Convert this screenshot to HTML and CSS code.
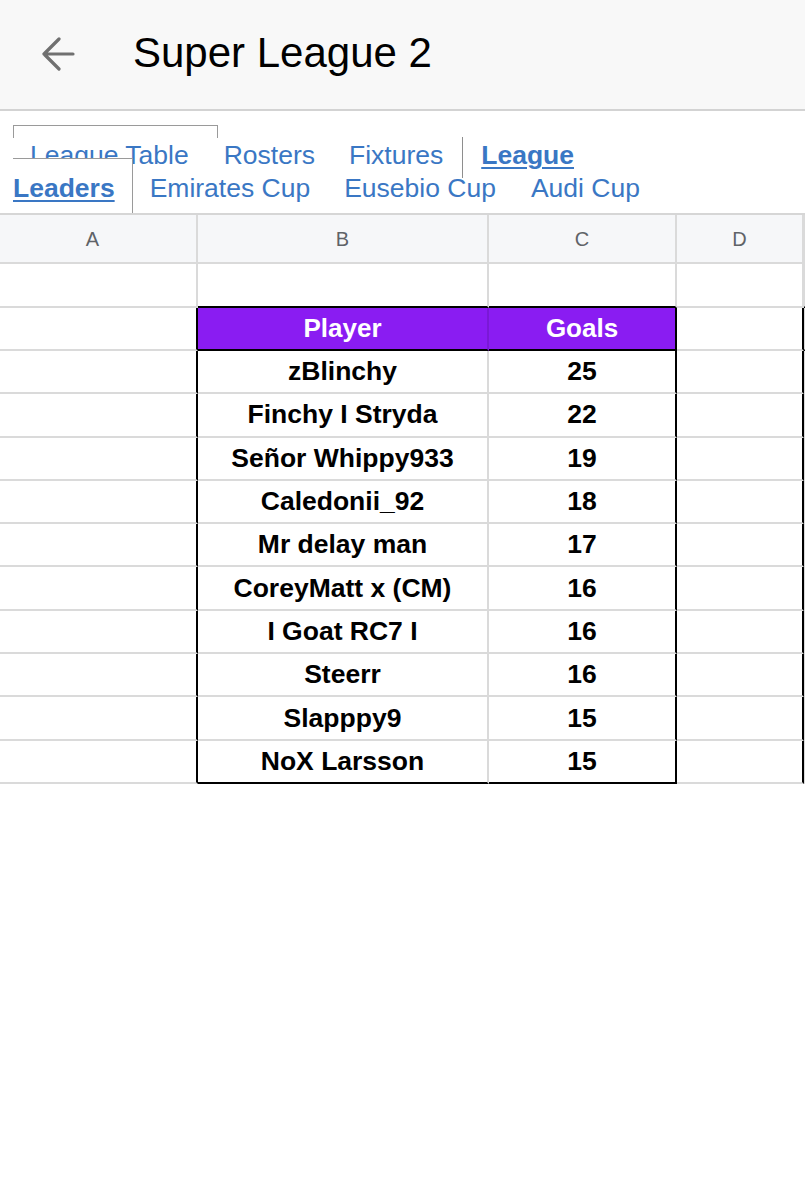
FILE: index.html
```html
<!DOCTYPE html>
<html lang="en">
<head>
    <meta charset="UTF-8">
    <meta name="viewport" content="width=device-width, initial-scale=1.0">
    <title>Super League 2</title>
    <link rel="stylesheet" href="styles.css">
</head>
<body>
    <header class="appbar">
        <a class="back" href="#">
            <svg width="34" height="34" viewBox="0 0 34 34">
                <path d="M32 17H3 M18 2L3 17l15 15" fill="none" stroke="#707070" stroke-width="3.2" stroke-linecap="round" stroke-linejoin="round"/>
            </svg>
        </a>
        <h1 class="title">Super League 2</h1>
    </header>

    <!-- sheet tabs, wrapped over two lines -->
    <nav class="tabs">
        <div class="tab-row">
            <a class="tab tab-boxed" href="#">League Table</a>
            <a class="tab tab-rosters" href="#">Rosters</a>
            <a class="tab" href="#">Fixtures</a>
            <a class="tab tab-current tab-split" href="#">League</a>
        </div>
        <div class="tab-row tab-row-second">
            <a class="tab tab-current tab-cut" href="#">Leaders</a>
            <a class="tab tab-after-cut" href="#">Emirates Cup</a>
            <a class="tab" href="#">Eusebio Cup</a>
            <a class="tab tab-audi" href="#">Audi Cup</a>
        </div>
    </nav>

    <div class="sheet" id="sheet">
        <div class="sheet-row row-heads">
            <div class="cell head head-first">A</div>
            <div class="cell head">B</div>
            <div class="cell head">C</div>
            <div class="cell head">D</div>
            <div class="cell head"></div>
        </div>
        <div class="sheet-row row-blank">
            <div class="cell"></div>
            <div class="cell edge-bottom"></div>
            <div class="cell edge-bottom"></div>
            <div class="cell"></div>
            <div class="cell edge-bottom"></div>
        </div>
        <div class="sheet-row row-title">
            <div class="cell edge-right"></div>
            <div class="cell purple purple-split">Player</div>
            <div class="cell purple edge-right">Goals</div>
            <div class="cell edge-right"></div>
            <div class="cell purple"></div>
        </div>
    </div>

    <script>
        const leaders = [
            { player: "zBlinchy", goals: 25 },
            { player: "Finchy I Stryda", goals: 22 },
            { player: "Señor Whippy933", goals: 19 },
            { player: "Caledonii_92", goals: 18 },
            { player: "Mr delay man", goals: 17 },
            { player: "CoreyMatt x (CM)", goals: 16 },
            { player: "I Goat RC7 I", goals: 16 },
            { player: "Steerr", goals: 16 },
            { player: "Slapppy9", goals: 15 },
            { player: "NoX Larsson", goals: 15 }
        ];

        function renderLeaders() {
            let html = "";
            leaders.forEach((row, i) => {
                const last = i === leaders.length - 1 ? " edge-bottom" : "";
                html += "<div class=\"sheet-row row-data\">" +
                    "<div class=\"cell edge-right\"></div>" +
                    "<div class=\"cell value" + last + "\">" + row.player + "</div>" +
                    "<div class=\"cell value edge-right" + last + "\">" + row.goals + "</div>" +
                    "<div class=\"cell edge-right\"></div>" +
                    "<div class=\"cell\"></div>" +
                    "</div>";
            });
            document.getElementById("sheet").insertAdjacentHTML("beforeend", html);
        }

        renderLeaders();
    </script>
</body>
</html>
```

FILE: styles.css
```css
body {
    margin: 0;
    font-family: "Liberation Sans", Arial, sans-serif;
    background-color: #fff;
    width: 805px;
    overflow: hidden;
}

/* top bar */
.appbar {
    display: flex;
    align-items: center;
    height: 111px;
    padding-bottom: 4px;
    box-sizing: border-box;
    background-color: #f8f8f8;
    border-bottom: 2px solid #d3d3d3;
}

.back {
    display: flex;
    margin-left: 41px;
    margin-top: 3px;
}

.title {
    margin: 0 0 0 58px;
    font-size: 42px;
    font-weight: normal;
    color: #000;
}

/* tabs */
.tabs {
    padding: 28px 0 8px 13px;
}

.tab-row {
    display: flex;
    align-items: flex-start;
    height: 33px;
    position: relative;
}

.tab-row-second {
    z-index: 1;
}

.tab {
    position: relative;
    font-size: 26.5px;
    line-height: 33px;
    color: #3a77c4;
    text-decoration: none;
    white-space: nowrap;
    margin-left: 34px;
}

.tab-current {
    font-weight: bold;
    text-decoration: underline;
    text-decoration-thickness: 2px;
    text-underline-offset: 3px;
}

.tab-boxed {
    margin-left: 0;
    padding: 0 29px 0 17px;
}

.tab-boxed::before {
    content: "";
    position: absolute;
    top: -14px;
    left: 0;
    right: 0;
    height: 12px;
    border: 1.5px solid #9a9a9a;
    border-bottom: none;
}

.tab-rosters {
    margin-left: 6px;
}

.tab-split {
    margin-left: 19px;
    padding: 0 0 6px 18px;
    border-left: 1.5px solid #8e8e8e;
    margin-top: -2px;
    padding-top: 2px;
}

.tab-cut {
    margin-left: 0;
    padding-right: 18px;
}

.tab-cut::before {
    content: "";
    position: absolute;
    top: -14px;
    left: 0;
    right: 0;
    bottom: -8px;
    background-color: #fff;
    border-top: 1.5px solid #9a9a9a;
    border-right: 1.5px solid #9a9a9a;
    z-index: -1;
}

.tab-after-cut {
    margin-left: 17px;
}

.tab-audi {
    margin-left: 35px;
}

/* spreadsheet grid */
.sheet {
    border-top: 2px solid #d6d6d6;
}

.sheet-row {
    display: grid;
    grid-template-columns: 198px 291px 188px 127px 1fr;
}

.cell {
    display: flex;
    align-items: center;
    justify-content: center;
    box-sizing: border-box;
    border-right: 2px solid #dadada;
    border-bottom: 2px solid #dadada;
    white-space: nowrap;
    overflow: hidden;
}

.row-heads {
    height: 49px;
}

.head {
    background-color: #f6f7f9;
    color: #5f6368;
    font-size: 20px;
    padding-top: 2px;
}

.head-first {
    padding-right: 11px;
}

.row-blank {
    height: 44px;
}

.row-title {
    height: 43px;
}

.row-data {
    height: 43.3px;
}

.purple {
    background-color: #8a1cf2;
    color: #fff;
    font-size: 26px;
    font-weight: bold;
    border-bottom-color: #000;
}

.purple-split {
    border-right-color: #7a18d6;
}

.value {
    font-size: 26.5px;
    font-weight: bold;
    color: #000;
}

.edge-right {
    border-right-color: #000;
}

.edge-bottom {
    border-bottom-color: #000;
}
```
